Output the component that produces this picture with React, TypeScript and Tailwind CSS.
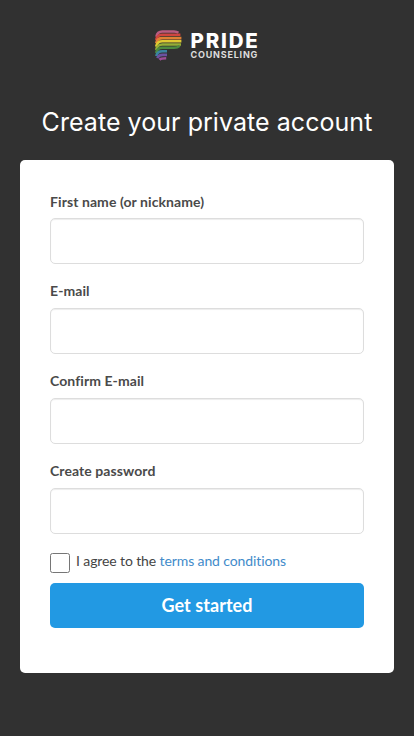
import React, { useState } from 'react';

interface Field {
  id: string;
  label: string;
  type: string;
}

const fields: Field[] = [
  { id: 'nickname', label: 'First name (or nickname)', type: 'text' },
  { id: 'email', label: 'E-mail', type: 'email' },
  { id: 'confirm-email', label: 'Confirm E-mail', type: 'email' },
  { id: 'password', label: 'Create password', type: 'password' },
];

// striped "P": each band runs from the bowl on the right and bends down on the left
const LogoMark: React.FC = () => (
  <svg width="27" height="31" viewBox="0 0 27 31" fill="none" strokeWidth="2.6">
    <path d="M1.4 6.8C2 3.2 4 1.5 7.4 1.5H19C21 1.5 22.4 2 23.4 2.8" stroke="#bb5b80" />
    <path d="M1.2 10C1.8 6.4 4 4.8 7.4 4.8H25.4" stroke="#d0453f" />
    <path d="M1.2 13.3C1.8 9.7 4 8.1 7.4 8.1H26.4" stroke="#e08035" />
    <path d="M1.2 16.6C1.8 13 4 11.3 7.4 11.3H26.4" stroke="#dfca32" />
    <path d="M1.2 19.9C1.8 16.3 4 14.5 7.4 14.5H26" stroke="#94ad36" />
    <path d="M1.2 23C1.8 19.5 4 17.7 7.4 17.7H19C21.6 17.7 23.4 17 24.6 15.8" stroke="#4c8a3f" />
    <path d="M1.3 26C1.9 22.8 4 21.3 7.4 21.3H12" stroke="#3b83a0" />
    <path d="M2.4 28.2C3.2 25.8 5 24.9 7.6 24.9H12" stroke="#6a52a0" />
    <path d="M4.6 29.8C5.6 28.6 7.2 28.3 11.2 28.3" stroke="#9e4e97" />
  </svg>
);

const Logo: React.FC = () => (
  <div className="flex h-[31px] justify-center gap-[9px]">
    <LogoMark />
    <div className="w-[69px] whitespace-nowrap text-white">
      <div className="h-5 font-['Inter',sans-serif] text-[20.5px] leading-[21px] font-extrabold tracking-[1.8px]">PRIDE</div>
      <div className="h-[11px] font-['Inter',sans-serif] text-[9px] leading-[10px] font-bold tracking-[0.8px] text-[#dddddd]">COUNSELING</div>
    </div>
  </div>
);

export default function App() {
  const [agreed, setAgreed] = useState(false);

  return (
    <div className="min-h-screen bg-[#313131] px-5 pt-[30px] font-['Lato',sans-serif] text-[#444444] [font-variant-ligatures:none]">
      <Logo />
      <h1 className="mt-[46px] text-center font-['Inter',sans-serif] text-[25px] leading-[30px] font-normal tracking-[0.05px] whitespace-nowrap text-white">
        Create your private account
      </h1>

      <form
        className="mt-[23px] h-[513px] rounded-[5px] bg-white px-[30px] pt-[31px]"
        onSubmit={(e) => e.preventDefault()}
      >
        {fields.map((field) => (
          <div key={field.id} className="group mb-[17px]">
            <label
              htmlFor={field.id}
              className="block h-[27px] text-sm leading-5 font-bold tracking-[0.08px] text-[#4a4a4a] group-first:pt-px"
            >
              {field.label}
            </label>
            <input
              id={field.id}
              type={field.type}
              className="block h-[46px] w-full rounded-[5px] border border-[#dddddd] bg-white px-3 shadow-[inset_0_1px_1px_rgba(0,0,0,0.075)] outline-none"
            />
          </div>
        ))}

        <div className="flex h-[32px] items-start gap-1.5 pt-0.5">
          <input
            type="checkbox"
            checked={agreed}
            onChange={(e) => setAgreed(e.target.checked)}
            className="m-0 h-5 w-5 shrink-0"
          />
          <span className="mt-[-2px] text-sm leading-5 tracking-[-0.11px] whitespace-nowrap">
            I agree to the <a href="#" className="text-[#428bca]">terms and conditions</a>
          </span>
        </div>

        <button
          type="submit"
          className="block h-[45px] w-full rounded-[5px] bg-[#2299e3] text-lg leading-[45px] font-bold tracking-[0.05px] text-white"
        >
          Get started
        </button>
      </form>
    </div>
  );
}
